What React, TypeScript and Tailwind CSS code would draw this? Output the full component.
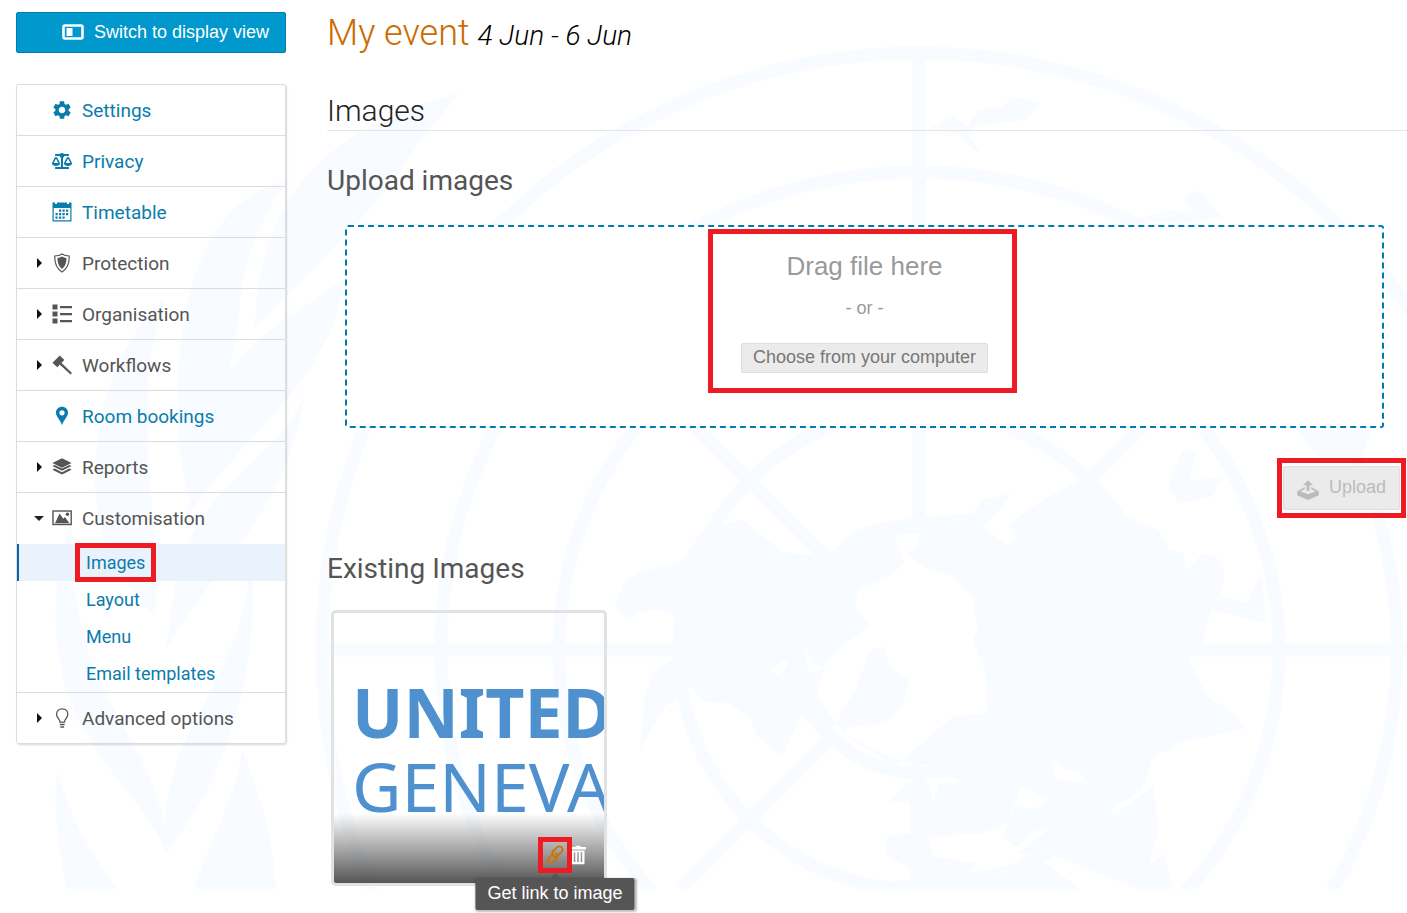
import React, { useState } from 'react';
import { FaBalanceScale } from 'react-icons/fa';
import { MdSettings } from 'react-icons/md';

interface SubItem {
  id: string;
  label: string;
}

interface MenuItem {
  id: string;
  label: string;
  icon: React.ReactNode;
  expandable?: boolean;
  children?: SubItem[];
}

function CalendarIcon() {
  return (
    <svg viewBox="0 0 20 20" className="h-5 w-5" fill="currentColor" aria-hidden="true">
      <path d="M.5.500h2.500V2h2V.500h10V2h2V.500h2.500V6H.5z" />
      <path d="M.5 6h1.200v12.200h16.600V6h1.200v13.400H.5z" />
      <path d="M7 7.500h2.200v2.200H7zM10.500 7.500h2.200v2.200h-2.200zM14 7.500h2.200v2.200H14zM3.500 11h2.200v2.200H3.500zM7 11h2.200v2.200H7zM10.500 11h2.200v2.200h-2.200zM14 11h2.200v2.200H14zM3.500 14.500h2.200v2.200H3.500zM7 14.500h2.200v2.200H7zM10.500 14.500h2.200v2.200h-2.200z" />
    </svg>
  );
}

function ShieldIcon() {
  return (
    <svg viewBox="0 0 20 20" className="h-5 w-5" aria-hidden="true">
      <path d="M10 .9c2 1.300 4.400 2 7.200 2.100.3 7-1.500 12.600-7.200 16-5.700-3.400-7.500-9-7.200-16C5.600 2.900 8 2.200 10 .9z" fill="none" stroke="currentColor" strokeWidth="1.200" />
      <path d="M10 3.600c1.400.8 2.900 1.300 4.500 1.400.1 4.700-1.100 8.400-4.500 10.900C6.600 13.400 5.400 9.700 5.500 5c1.600-.1 3.100-.6 4.500-1.400z" fill="currentColor" />
    </svg>
  );
}

function ListIcon() {
  return (
    <svg viewBox="0 0 20 20" className="h-5 w-5" fill="currentColor" aria-hidden="true">
      <path d="M.5.500h5v5h-5zM.5 7.500h5v5h-5zM.5 14.500h5v5h-5zM8 2h12v2.200H8zM8 9h12v2.200H8zM8 16h12v2.200H8z" />
    </svg>
  );
}

function GavelIcon() {
  return (
    <svg viewBox="0 0 20 20" className="h-5 w-5" fill="currentColor" aria-hidden="true">
      <path d="M.5 7.800 7.800.5 12.300 5 5.200 12.200z" />
      <path d="m7.600 9.500 1.700-1.700L20 18 18.600 19.500z" />
    </svg>
  );
}

function PinIcon() {
  return (
    <svg viewBox="0 0 20 20" className="h-5 w-5" fill="currentColor" aria-hidden="true">
      <path fillRule="evenodd" d="M10 .8c3.500 0 6 2.600 6 5.900 0 4-4 6.300-6 12.500-2-6.200-6-8.500-6-12.500C4 3.400 6.500.8 10 .8zm0 3.400a2.600 2.600 0 1 0 0 5.200 2.600 2.600 0 0 0 0-5.200z" />
    </svg>
  );
}

function LayersIcon() {
  return (
    <svg viewBox="0 0 20 20" className="h-5 w-5" fill="currentColor" aria-hidden="true">
      <path d="m10 1.300 9.600 4.700L10 10.700.4 6z" />
      <path d="m.4 9 2.300-1.100L10 11.500l7.300-3.600L19.600 9 10 13.700z" />
      <path d="m.4 12.700 2.300-1.100 7.300 3.600 7.300-3.600 2.300 1.100-9.600 4.700z" />
    </svg>
  );
}

function PictureIcon() {
  return (
    <svg viewBox="0 0 20 20" className="h-5 w-5" aria-hidden="true">
      <rect x="1" y="3" width="18.200" height="13.500" fill="none" stroke="currentColor" strokeWidth="1.400" />
      <path d="m3 15.200 4.600-9.700 3.700 5.200 1.600-1.700 4.600 6.200z" fill="currentColor" />
      <circle cx="15.400" cy="6.200" r="1.800" fill="currentColor" />
    </svg>
  );
}

function BulbIcon() {
  return (
    <svg viewBox="0 0 20 20" className="h-5 w-5" fill="none" stroke="currentColor" strokeWidth="1.300" aria-hidden="true">
      <path d="M8 14.200c0-3-3.400-4.200-3.400-8C4.600 3 7 .9 10.200.9s5.600 2.100 5.600 5.300c0 3.800-3.400 5-3.400 8z" />
      <path d="M7.800 16.500h4.800M8.300 18.900h3.800" strokeWidth="1.500" />
    </svg>
  );
}

function DisplayIcon() {
  return (
    <svg viewBox="0 0 22 16" className="h-4 w-[22px]" aria-hidden="true">
      <rect x="1.500" y="1.500" width="19" height="13" rx="1.500" fill="none" stroke="currentColor" strokeWidth="2.600" />
      <rect x="4.500" y="4" width="6" height="8" fill="currentColor" />
    </svg>
  );
}

function UploadIcon() {
  return (
    <svg viewBox="0 0 22 20" className="h-5 w-[22px]" fill="currentColor" aria-hidden="true">
      <path d="m11 .3 5 5h-3.500v5.400h-3V5.300H6z" />
      <path fillRule="evenodd" d="m7.800 7-7.600 4.300v4L11 20l10.800-4.700v-4L14.200 7v1.900l4.300 2.500L11 14.200l-7.500-2.800 4.300-2.500z" />
    </svg>
  );
}

function ChainIcon() {
  return (
    <svg viewBox="0 0 20 20" className="h-5 w-5" fill="none" stroke="currentColor" strokeWidth="1.900" strokeLinecap="round" aria-hidden="true">
      <g transform="rotate(-45 10 10)">
        <path d="M9.500 12.400H8.300a3.200 3.200 0 0 1 0-6.400" transform="translate(3 0)" />
        <path d="M11.300 6h5.500a3.200 3.200 0 0 1 0 6.400h-4" />
        <path d="M8.700 14H3.200a3.200 3.200 0 0 1 0-6.400h4" />
        <path d="M8.700 14a3.200 3.200 0 0 0 2.600-5" />
      </g>
    </svg>
  );
}

function TrashIcon() {
  return (
    <svg viewBox="0 0 18 20" className="h-5 w-[18px]" fill="currentColor" aria-hidden="true">
      <path d="M6.500.8h5v1.300H17v2.300H1V2.100h5.500z" />
      <path fillRule="evenodd" d="M2.500 5.400h13v13.800h-13zM4.800 7.300v9.600h1.500V7.300zm3.400 0v9.600h1.500V7.300zm3.500 0v9.600h1.500V7.300z" />
    </svg>
  );
}

const menuItems: MenuItem[] = [
  { id: 'settings', label: 'Settings', icon: <MdSettings className="h-[22px] w-[22px]" /> },
  { id: 'privacy', label: 'Privacy', icon: <FaBalanceScale className="h-5 w-5" /> },
  { id: 'timetable', label: 'Timetable', icon: <CalendarIcon /> },
  { id: 'protection', label: 'Protection', icon: <ShieldIcon />, expandable: true },
  { id: 'organisation', label: 'Organisation', icon: <ListIcon />, expandable: true },
  { id: 'workflows', label: 'Workflows', icon: <GavelIcon />, expandable: true },
  { id: 'rooms', label: 'Room bookings', icon: <PinIcon /> },
  { id: 'reports', label: 'Reports', icon: <LayersIcon />, expandable: true },
  {
    id: 'customisation',
    label: 'Customisation',
    icon: <PictureIcon />,
    expandable: true,
    children: [
      { id: 'images', label: 'Images' },
      { id: 'layout', label: 'Layout' },
      { id: 'menu', label: 'Menu' },
      { id: 'emails', label: 'Email templates' },
    ],
  },
  { id: 'advanced', label: 'Advanced options', icon: <BulbIcon />, expandable: true },
];

function Highlight({ className }: { className: string }) {
  return <span aria-hidden="true" className={`pointer-events-none absolute z-10 border-[5px] border-[#ed1c24] ${className}`} />;
}

function Watermark() {
  return (
    <svg aria-hidden="true" className="pointer-events-none absolute left-0 top-0" width="1407" height="889" viewBox="0 0 1407 889">
      <g fill="none" stroke="#f8fbff" strokeWidth="13">
        <circle cx="919" cy="650" r="597" />
        <circle cx="919" cy="650" r="478" />
        <circle cx="919" cy="650" r="360" />
        <circle cx="919" cy="650" r="240" />
        <circle cx="919" cy="650" r="123" />
        <path d="M919 50V527M919 773V889M322 650H700M1190 650H1407M581 312 832 563M1257 312 1006 563M680 889 832 737" />
      </g>
      <g fill="#f8fbff">
        <path d="M460 93C350 120 258 180 255 328C300 280 380 210 420 140z" />
        <path d="M290 180C190 200 175 330 178 428C180 470 190 500 190 500C210 430 235 380 240 300C245 260 262 210 290 180z" />
        <path d="M345 278C290 320 215 350 210 430C200 470 190 500 180 530C230 440 330 390 345 278z" />
        <path d="M165 297C110 350 95 420 95 490C98 550 130 590 155 618C160 540 145 480 148 400C148 360 155 330 165 297z" />
        <path d="M304 394C290 450 185 490 175 590C170 610 168 640 166 650C210 570 290 510 304 394z" />
        <path d="M72 520C50 580 50 650 72 705C95 765 145 800 168 855C165 780 120 730 95 670C80 630 70 580 72 520z" />
        <path d="M250 550C262 640 240 760 165 855C160 760 200 720 215 680C235 640 250 610 250 550z" />
        <path d="M57 770C52 810 60 850 66 889H116C90 850 70 820 57 770z" />
        <path d="M242 750C235 800 210 840 194 889H276C272 830 258 790 242 750z" />
      </g>
      <g fill="#f8fbff" transform="translate(640 430) scale(.4892 .3333)">
        <path
          fillRule="evenodd"
          d="M-30 450 0 425 85 395 95 370 125 310 165 285 210 270 290 365 340 375 400 360 430 310 480 280 560 265 680 250 700 210 760 190 740 230 700 290 750 345 768 325 755 285 790 240 850 190 900 150 940 170 960 240 1060 300 1080 360 1112 370 1115 425 1150 370 1180 380 1195 430 1185 500 1165 550 1150 635 1120 685 1160 800 1215 850 1235 895 1160 920 1110 935 1050 980 1025 1080 960 1140 970 1155 1050 1070 1060 1200 1040 1310 1070 1270 1092 1377H1020L850 1280 770 1270 840 1195 810 1200 770 1250 740 1220 770 1120 800 1140 840 1110 780 1070 750 1180 700 1210 590 1220 600 1280 690 1300 670 1330 820 1290 900 1377H450L555 1345 545 1310 505 1280V1220L555 1210 550 1115 510 1115 545 1060 590 1060 600 1120 610 1060 665 1060 640 1040 590 1030 600 920 640 860 520 1010 415 910 400 880 370 920 330 855 290 980 240 920 225 860 180 820 130 815 105 770 50 830 0 960 10 800 30 720 70 685V640L75 560 40 540 0 545-30 570-50 520zM520 310H570V350L545 370 580 410 640 440 680 500 690 600 680 630 705 720 710 850 640 860 600 920 595 1000 560 1010 480 960 415 910 430 890 500 880 540 820 550 750 510 710 500 650 470 660 440 780 400 880 360 790 380 700 420 640 470 590 440 530 445 480 510 440 540 400zM265 720 300 685 300 710 285 738zM335 640 352 700 375 710 345 730zM840 980 850 1050 910 1055 900 1025 870 1020z"
        />
        <path d="M595 305 650 270 690 350 640 310zM1080 160 1110 60 1135 70 1125 150 1190 145 1170 200 1100 220zM1190 500 1240 520 1270 430 1280 580 1170 540zM1345 0H1495L1475 90H1390z" />
        {/* islands above the drop zone */}
        <path d="M585-900 640-940 670-910 690-960 740-970 760-1000 820-980 790-930 690-915 670-890 695-830 680-840 650-890z" />
        <path d="M1010-630 1080-660 1130-650 1110-700 1140-720 1190-640 1110-620z" />
      </g>
    </svg>
  );
}

function SideMenu() {
  const [open, setOpen] = useState<string | null>('customisation');
  const rowClass = 'flex h-[50px] w-full items-center pl-[13px] text-left text-[19px]';

  return (
    <nav aria-label="Event management" className="rounded-[3px] border border-[#dcdcdc] shadow-[1px_1px_2px_rgba(0,0,0,0.15)]">
      <ul className="divide-y divide-[#dcdcdc]">
        {menuItems.map((item) => {
          const expanded = open === item.id;
          const content = (
            <>
              <span className="flex w-[18px] justify-center">
                {item.expandable && (
                  <span
                    className={
                      expanded
                        ? 'border-x-[5px] border-t-[5px] border-x-transparent border-t-[#222222]'
                        : 'border-y-[5px] border-l-[5px] border-y-transparent border-l-[#111111]'
                    }
                  />
                )}
              </span>
              <span className="ml-[3px] flex w-[22px] justify-center">{item.icon}</span>
              <span className="pl-[9px] pt-[2px]">{item.label}</span>
            </>
          );
          return (
            <li key={item.id}>
              {item.expandable ? (
                <button
                  type="button"
                  aria-expanded={expanded}
                  onClick={() => setOpen(expanded ? null : item.id)}
                  className={`${rowClass} text-[#555555]`}
                >
                  {content}
                </button>
              ) : (
                <a href="#" className={`${rowClass} text-[#0a7cac]`}>
                  {content}
                </a>
              )}
              {expanded && item.children && (
                <ul className="pt-px">
                  {item.children.map((child) => (
                    <li key={child.id} className={child.id === 'images' ? 'border-l-2 border-[#0b62a4] bg-[#eaf2fc]' : 'border-l-2 border-transparent'}>
                      <a href="#" className="flex h-[37px] items-center pl-[67px] text-[18px] text-[#0a7cac]">
                        <span className="relative">
                          {child.label}
                          {child.id === 'images' && <Highlight className="-inset-x-[11px] -inset-y-[6px]" />}
                        </span>
                      </a>
                    </li>
                  ))}
                </ul>
              )}
            </li>
          );
        })}
      </ul>
    </nav>
  );
}

function UploadArea() {
  return (
    <form onSubmit={(e) => e.preventDefault()}>
      <div className="ml-[18px] mr-[23px] mt-[26px] flex h-[203px] flex-col items-center rounded-[3px] border-2 border-dashed border-[#007cac] bg-white font-['Liberation_Sans',Arial,sans-serif]">
        <div className="relative mt-[23px] flex flex-col items-center text-[#999999]">
          <p className="text-[26px] leading-8">Drag file here</p>
          <p className="mt-[14px] text-[18px] leading-6">- or -</p>
          <button type="button" className="mt-[23px] h-[30px] rounded-[2px] border border-[#dddddd] bg-[#ebebeb] px-[11px] pb-[3px] text-[18px] leading-6 text-[#777777]">
            Choose from your computer
          </button>
          <Highlight className="-bottom-5 -left-[33px] -right-[29px] -top-[21px]" />
        </div>
      </div>
      <div className="mr-[7px] mt-[38px] flex justify-end font-['Liberation_Sans',Arial,sans-serif]">
        <div className="relative">
          <button type="submit" disabled className="flex h-[44px] items-center gap-[10px] rounded-[2px] border border-[#dddddd] bg-[#ebebeb] px-[13px] text-[18px] text-[#bbbbbb]">
            <span className="pt-1">
              <UploadIcon />
            </span>
            <span className="pb-[2px]">Upload</span>
          </button>
          <Highlight className="-inset-x-[6px] -inset-y-2" />
        </div>
      </div>
    </form>
  );
}

function Thumbnail() {
  return (
    <figure className="relative ml-[7px] mt-[26px] h-[270px] w-[270px] rounded-[2px] shadow-[0_0_0_3px_#e2e2e2]">
      <div className="h-full overflow-hidden whitespace-nowrap rounded-[2px] pl-[18px] pt-[62px] font-['Noto_Sans',sans-serif] text-[68px] leading-[74px] text-[#4f91cf]">
        <p className="font-bold">UNITED</p>
        <p>GENEVA</p>
      </div>
      <figcaption className="absolute inset-x-0 bottom-0 flex h-[70px] items-end justify-end rounded-b-[2px] bg-gradient-to-b from-transparent to-[#555555] pb-[18px] pr-[17px]">
        <div className="relative mr-1">
          <button type="button" aria-label="Get link to image" aria-describedby="link-tip" className="block text-[#d07400]">
            <ChainIcon />
          </button>
          <Highlight className="-inset-x-[7px] -inset-y-2" />
          <div
            id="link-tip"
            role="tooltip"
            className="absolute left-1/2 top-[33px] -translate-x-1/2 whitespace-nowrap rounded-[2px] bg-[#555555] px-3 pb-[5px] pt-[3px] font-['Liberation_Sans',Arial,sans-serif] text-[18px] leading-6 text-white shadow-[1px_1px_2px_1px_rgba(0,0,0,0.25)]"
          >
            <span className="absolute -top-[5px] left-1/2 -translate-x-1/2 border-x-[5px] border-b-[5px] border-x-transparent border-b-[#555555]" />
            Get link to image
          </div>
        </div>
        <button type="button" aria-label="Delete image" className="text-white">
          <TrashIcon />
        </button>
      </figcaption>
    </figure>
  );
}

export default function App() {
  return (
    <div className="relative min-h-screen overflow-hidden bg-white font-['Roboto',sans-serif]">
      <Watermark />
      <div className="relative flex">
        <aside className="ml-4 w-[270px] shrink-0 pt-3">
          <a
            href="#"
            className="flex h-[41px] items-center justify-end gap-[10px] rounded-[2px] border border-[#007cac] bg-[#0098cd] pb-px pr-4 font-['Liberation_Sans',Arial,sans-serif] text-[18px] text-white"
          >
            <DisplayIcon />
            Switch to display view
          </a>
          <div className="mt-[31px]">
            <SideMenu />
          </div>
        </aside>

        <main className="ml-[41px] min-w-0 flex-1 pt-3">
          <h1 className="flex items-baseline gap-2 text-[36px] font-light leading-[42px] text-[#cb6b00]">
            My event
            <span className="text-[28px] italic text-black">4 Jun - 6 Jun</span>
          </h1>
          <h2 className="mt-[34px] border-b border-[#e6e6e6] text-[30px] font-light leading-[39px] text-[#222222]">Images</h2>
          <h3 className="mt-8 text-[28px] leading-9 text-[#555555]">Upload images</h3>
          <UploadArea />
          <h3 className="mt-[41px] text-[28px] leading-9 text-[#555555]">Existing Images</h3>
          <Thumbnail />
        </main>
      </div>
    </div>
  );
}
